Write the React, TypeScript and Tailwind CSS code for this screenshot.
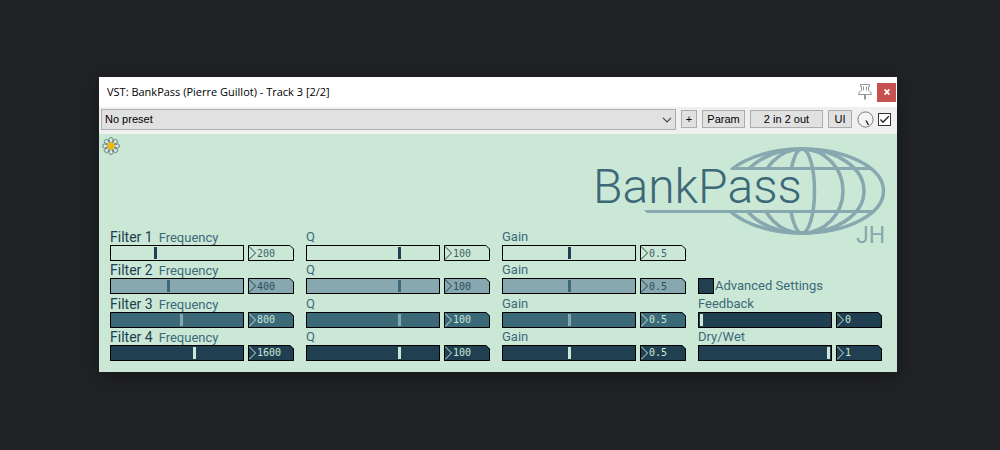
import { useId, useState } from "react";

type Theme = { fill: string; thumb: string; text: string; stroke: string };

const LIGHT: Theme = {
  fill: "bg-[#cbe8d7]",
  thumb: "[&::-webkit-slider-thumb]:bg-[#204051]",
  text: "text-[#3f5f68]",
  stroke: "#204051",
};
const MIST: Theme = {
  fill: "bg-[#86a8ae]",
  thumb: "[&::-webkit-slider-thumb]:bg-[#3b6978]",
  text: "text-[#2c4d5c]",
  stroke: "#204051",
};
const TEAL: Theme = {
  fill: "bg-[#3b6978]",
  thumb: "[&::-webkit-slider-thumb]:bg-[#86a8ae]",
  text: "text-[#cbe8d7]",
  stroke: "#cbe8d7",
};
const NAVY: Theme = {
  fill: "bg-[#204051]",
  thumb: "[&::-webkit-slider-thumb]:bg-[#cbe8d7]",
  text: "text-[#cbe8d7]",
  stroke: "#cbe8d7",
};

const FILTERS = [
  { theme: LIGHT, frequency: "200", position: 42 },
  { theme: MIST, frequency: "400", position: 55 },
  { theme: TEAL, frequency: "800", position: 68 },
  { theme: NAVY, frequency: "1600", position: 81 },
];

function NumberBox({ label, value, theme }: { label: string; value: string; theme: Theme }) {
  return (
    <div className="relative h-4 w-[46px] shrink-0">
      <input
        type="text"
        aria-label={label}
        defaultValue={value}
        className={`block h-4 w-full pt-px pl-[9px] font-['DejaVu_Sans_Mono',monospace] text-[10px] leading-4 outline-none [clip-path:polygon(0_0,42px_0,46px_4px,46px_100%,0_100%)] ${theme.fill} ${theme.text}`}
      />
      <svg viewBox="0 0 46 16" className="pointer-events-none absolute inset-0 h-4 w-[46px]" fill="none" aria-hidden="true">
        <path d="M1 1.5 L7.5 8 L1 14.5" stroke={theme.stroke} />
        <path d="M0.5 0.5 H42 L45.5 4 V15.5 H0.5 Z" stroke="#000" />
      </svg>
    </div>
  );
}

type ControlProps = {
  prefix?: string;
  label: string;
  value: string;
  position: number;
  theme: Theme;
};

function Control({ prefix, label, value, position, theme }: ControlProps) {
  const id = useId();
  const name = prefix ? `${prefix} ${label}` : label;
  return (
    <div className="flex min-w-0 flex-col">
      <label htmlFor={id} className="flex h-[17px] items-baseline gap-1.5 whitespace-nowrap text-[13px] leading-[18px] text-[#3b6978]">
        {prefix && <span className="text-[14px] text-[#204051]">{prefix}</span>}
        <span>{label}</span>
      </label>
      <div className="flex gap-1">
        <input
          id={id}
          type="range"
          min={0}
          max={127}
          defaultValue={position}
          className={`block h-4 min-w-0 flex-1 appearance-none border border-black px-px outline-none [&::-webkit-slider-thumb]:h-3 [&::-webkit-slider-thumb]:w-[3px] [&::-webkit-slider-thumb]:appearance-none ${theme.fill} ${theme.thumb}`}
        />
        <NumberBox label={`${name} value`} value={value} theme={theme} />
      </div>
    </div>
  );
}

function Daisy() {
  return (
    <svg viewBox="0 0 18 18" className="h-[18px] w-[18px]" aria-hidden="true">
      {[0, 45, 90, 135, 180, 225, 270, 315].map((angle) => (
        <path
          key={angle}
          d="M8.2 5.8 L6.9 2.4 Q6.9 0.6 9 0.6 Q11.1 0.6 11.1 2.4 L9.8 5.8"
          transform={`rotate(${angle} 9 9)`}
          fill="#d4ebdf"
          stroke="#5f7570"
          strokeWidth="0.9"
        />
      ))}
      <circle cx="9" cy="9" r="3.4" fill="#f2b705" />
    </svg>
  );
}

function Logo() {
  return (
    <svg viewBox="0 0 300 94" className="h-[94px] w-[300px] overflow-visible" role="img" aria-label="BankPass JH">
      <clipPath id="globe-area">
        <path d="M100 0 H300 V110 H100 V77 H212 V35 H100 Z" />
      </clipPath>
      <g fill="none" stroke="#86a8ae" strokeWidth="3.5">
        <g clipPath="url(#globe-area)">
          <ellipse cx="212" cy="57" rx="81.5" ry="42" />
          <ellipse cx="212" cy="57" rx="62" ry="42" />
          <ellipse cx="212" cy="57" rx="41" ry="42" />
          <ellipse cx="212" cy="57" rx="12.5" ry="42" />
        </g>
      </g>
      <path d="M143 33 H282 V36 H140 Z M54 76 H282 V79 H57 Z" fill="#86a8ae" />
      <text x="3" y="69" fill="#3b6978" className="font-['Roboto',sans-serif] text-[48px] font-light">
        BankPass
      </text>
      <text x="266" y="109" fill="#86a8ae" className="font-['Roboto',sans-serif] text-[23px]">
        JH
      </text>
    </svg>
  );
}

function TitleBar() {
  return (
    <header className="flex h-[30px] items-center bg-white pr-px pl-2">
      <h1 className="min-w-0 flex-1 truncate font-['Open_Sans',sans-serif] text-[11px] leading-4 text-black">
        VST: BankPass (Pierre Guillot) - Track 3 [2/2]
      </h1>
      <button type="button" aria-label="Pin window" className="mr-1 flex">
        <svg viewBox="0 0 16 18" className="h-[18px] w-4" fill="none" stroke="#8c8c8c" aria-hidden="true">
          <path d="M3.5 1.5 H12.5 V3.5 H11.5 V7.5 Q14.5 8.5 14.5 11.5 H1.5 Q1.5 8.5 4.5 7.5 V3.5 H3.5 Z M6.5 3.5 V7.5 M9.5 3.5 V7.5 M7.5 11.5 V16.5 M8.5 11.5 V16.5" strokeWidth="0.9" />
        </svg>
      </button>
      <button
        type="button"
        aria-label="Close"
        className="flex h-[19px] w-[19px] items-center justify-center bg-[#c75050]"
      >
        <svg viewBox="0 0 6 6" className="h-[6px] w-[6px]" stroke="#fff" strokeWidth="1.8" aria-hidden="true">
          <path d="M0.6 0.4 L5.4 5.6 M5.4 0.4 L0.6 5.6" />
        </svg>
      </button>
    </header>
  );
}

function Toolbar() {
  const button = "h-[18px] shrink-0 border border-[#adadad] bg-[#e1e1e1] text-center leading-4";
  return (
    <div className="flex h-[27px] items-center bg-[#f0f0f0] pr-1.5 pb-[3px] pl-0.5 font-['Liberation_Sans',sans-serif] text-[11px] text-black">
      <div className="relative mr-[5px] min-w-0 flex-1">
        <select
          aria-label="Preset"
          className="block h-[21px] w-full appearance-none border border-[#adadad] bg-[#e1e1e1] pl-[3px] leading-4"
        >
          <option>No preset</option>
        </select>
        <svg viewBox="0 0 10 6" className="pointer-events-none absolute top-2 right-1 h-[6px] w-[10px]" fill="none" stroke="#444" aria-hidden="true">
          <path d="M1 0.8 L5 4.8 L9 0.8" strokeWidth="1.2" />
        </svg>
      </div>
      <button type="button" className={`${button} mr-[5px] w-4`}>+</button>
      <button type="button" className={`${button} mr-[5px] w-[43px]`}>Param</button>
      <button type="button" className={`${button} mr-[5px] w-[73px]`}>2 in 2 out</button>
      <button type="button" className={`${button} mr-[5px] w-6`}>UI</button>
      <button type="button" aria-label="Wet mix" className="mr-1 flex shrink-0">
        <svg viewBox="0 0 17 17" className="h-[17px] w-[17px]" fill="none" aria-hidden="true">
          <circle cx="8.5" cy="8.5" r="7.6" fill="#f4f4f4" stroke="#7d7d7d" />
          <path d="M9 9.5 L11.5 14" stroke="#222" strokeWidth="1.4" />
        </svg>
      </button>
      <div className="relative h-[13px] w-[13px] shrink-0">
        <input
          type="checkbox"
          aria-label="Enable plug-in"
          defaultChecked
          className="peer block h-[13px] w-[13px] appearance-none border border-[#333] bg-white"
        />
        <svg viewBox="0 0 13 13" className="pointer-events-none absolute inset-0 hidden h-[13px] w-[13px] peer-checked:block" fill="none" stroke="#222" aria-hidden="true">
          <path d="M2.5 6.5 L5 9.2 L10.8 3.2" strokeWidth="1.3" />
        </svg>
      </div>
    </div>
  );
}

export default function App() {
  const [advanced, setAdvanced] = useState(true);
  return (
    <div className="min-h-screen bg-[#212226] pt-[77px] pr-[103px] pb-[78px] pl-[99px]">
      <main className="min-w-[760px] shadow-[0_4px_18px_rgba(0,0,0,0.35)]">
        <TitleBar />
        <Toolbar />
        <section className="bg-[#cbe8d7] pr-[15px] pb-[11px] pl-[11px] font-['Roboto',sans-serif]">
          <div className="-ml-2 flex justify-between">
            <div className="pt-[3px]">
              <Daisy />
            </div>
            <div className="-mr-2">
              <Logo />
            </div>
          </div>
          <div className="grid h-[133px] grid-cols-4 gap-x-3">
            <div className="flex flex-col justify-between">
              {FILTERS.map((f, i) => (
                <Control key={i} prefix={`Filter ${i + 1}`} label="Frequency" value={f.frequency} position={f.position} theme={f.theme} />
              ))}
            </div>
            <div className="flex flex-col justify-between">
              {FILTERS.map((f, i) => (
                <Control key={i} label="Q" value="100" position={90} theme={f.theme} />
              ))}
            </div>
            <div className="flex flex-col justify-between">
              {FILTERS.map((f, i) => (
                <Control key={i} label="Gain" value="0.5" position={64} theme={f.theme} />
              ))}
            </div>
            <div className="flex flex-col justify-between">
              <div className="h-[33px]" />
              <label className="flex h-[33px] items-end gap-px text-[13px] leading-4 text-[#3b6978]">
                <input
                  type="checkbox"
                  checked={advanced}
                  onChange={(e) => setAdvanced(e.target.checked)}
                  className="h-4 w-4 appearance-none border border-black bg-[#cbe8d7] checked:bg-[#204051]"
                />
                Advanced Settings
              </label>
              <Control label="Feedback" value="0" position={0} theme={NAVY} />
              <Control label="Dry/Wet" value="1" position={127} theme={NAVY} />
            </div>
          </div>
        </section>
      </main>
    </div>
  );
}
